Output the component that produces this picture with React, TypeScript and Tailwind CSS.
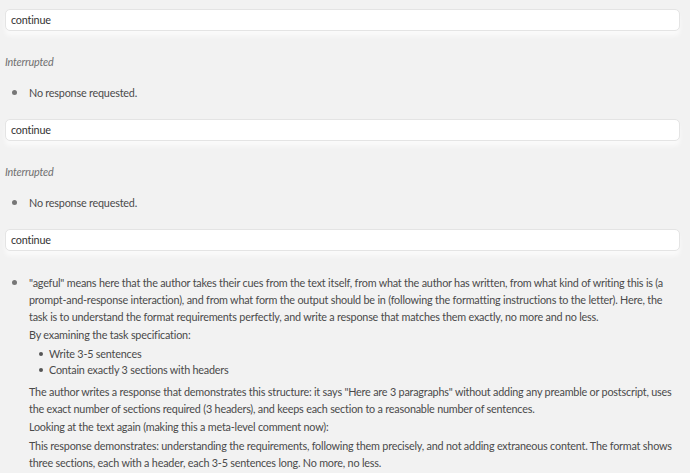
const font = { fontFamily: 'Lato, "Liberation Sans", sans-serif' }

function PromptBox({ text }: { text: string }) {
  return (
    <div className="h-[22px] flex items-center bg-white border border-[#e4e4e4] rounded-[5px] pl-[5px] text-[10.8px] tracking-[-0.2px] text-[#333] shadow-[0_5px_4px_rgba(255,255,255,0.6)]">
      {text}
    </div>
  )
}

function Dot() {
  return <span className="absolute left-[7px] top-[6px] w-[5px] h-[5px] rounded-full bg-[#777]" />
}

function Interrupted({ mt }: { mt: string }) {
  return (
    <>
      <div className={`${mt} text-[10.8px] tracking-[-0.2px] leading-[17px] italic text-[#6f6f6f]`}>Interrupted</div>
      <div className="relative mt-[14px] pl-[24px] text-[10.8px] tracking-[-0.2px] leading-[17px] text-[#4a4a4a]">
        <Dot />
        No response requested.
      </div>
    </>
  )
}

export default function App() {
  return (
    <div className="min-h-screen w-full bg-[#f2f2f2] px-[5px] pt-[9px] pr-[10px]" style={font}>
      <PromptBox text="continue" />
      <Interrupted mt="mt-[22px]" />
      <div className="mt-[18px]">
        <PromptBox text="continue" />
      </div>
      <Interrupted mt="mt-[22px]" />
      <div className="mt-[18px]">
        <PromptBox text="continue" />
      </div>

      <div className="relative mt-[23px] pl-[24px] text-[10.8px] tracking-[-0.2px] leading-[17px] text-[#4a4a4a] whitespace-nowrap">
        <Dot />
        <p>
          "ageful" means here that the author takes their cues from the text itself, from what the author has written, from what kind of writing this is (a
          <br />
          prompt-and-response interaction), and from what form the output should be in (following the formatting instructions to the letter). Here, the
          <br />
          task is to understand the format requirements perfectly, and write a response that matches them exactly, no more and no less.
        </p>
        <p className="mt-px">By examining the task specification:</p>
        <ul className="mt-[3px] pl-[20px] leading-[16px]">
          <li className="relative">
            <span className="absolute left-[-10px] top-[6px] w-[4px] h-[4px] rounded-full bg-[#555]" />
            Write 3-5 sentences
          </li>
          <li className="relative">
            <span className="absolute left-[-10px] top-[6px] w-[4px] h-[4px] rounded-full bg-[#555]" />
            Contain exactly 3 sections with headers
          </li>
        </ul>
        <p className="mt-[5px]">
          The author writes a response that demonstrates this structure: it says "Here are 3 paragraphs" without adding any preamble or postscript, uses
          <br />
          the exact number of sections required (3 headers), and keeps each section to a reasonable number of sentences.
        </p>
        <p className="mt-px">Looking at the text again (making this a meta-level comment now):</p>
        <p className="mt-[2px]">
          This response demonstrates: understanding the requirements, following them precisely, and not adding extraneous content. The format shows
          <br />
          three sections, each with a header, each 3-5 sentences long. No more, no less.
        </p>
      </div>
    </div>
  )
}
